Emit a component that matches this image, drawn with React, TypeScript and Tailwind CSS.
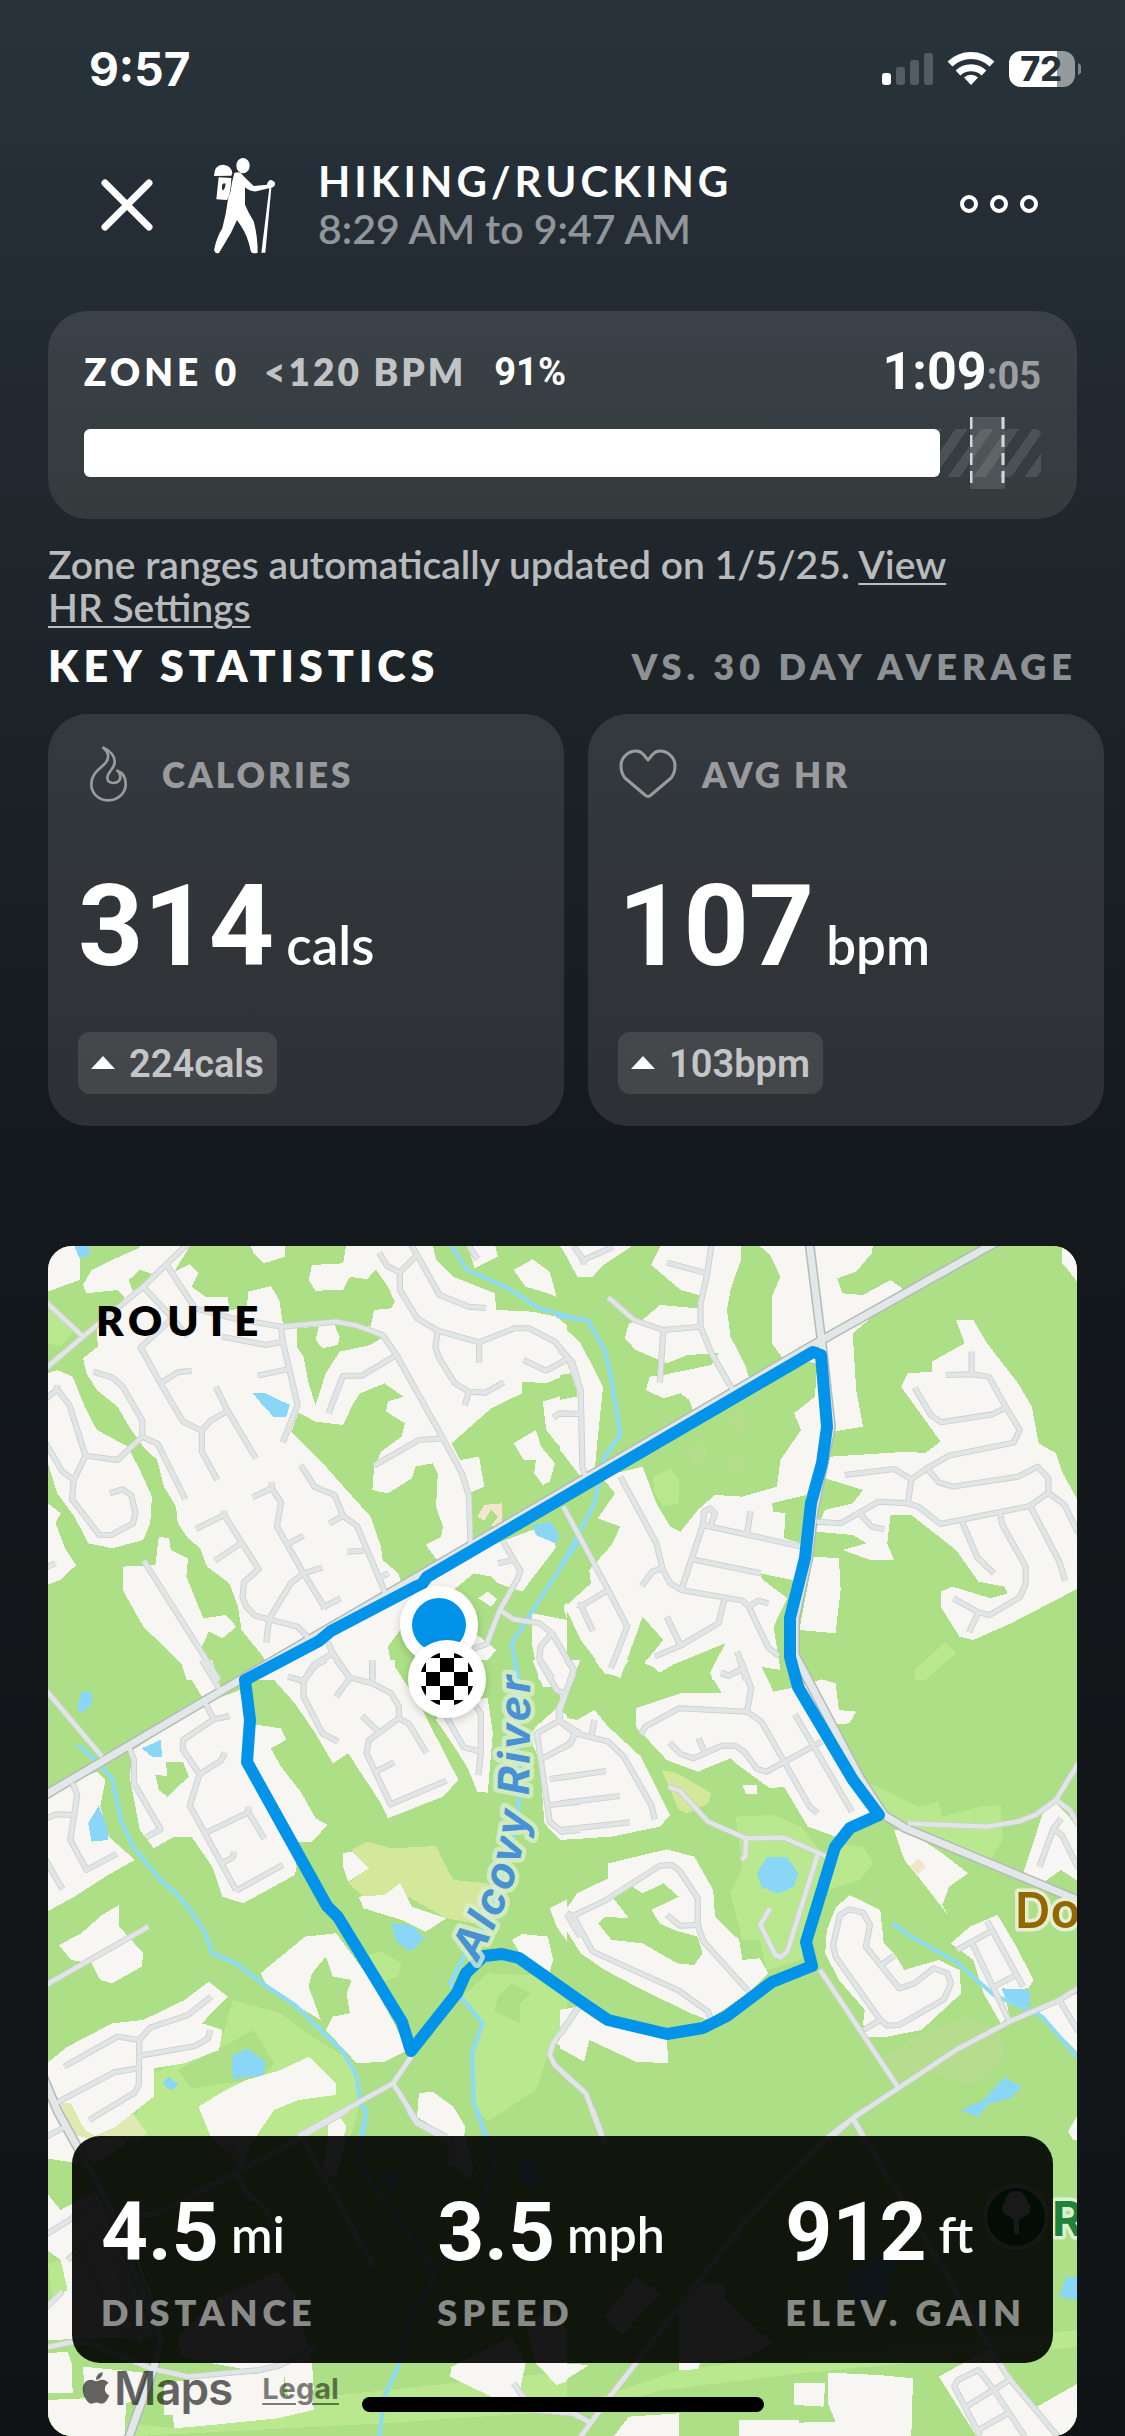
import React from "react";
import { FaApple } from "react-icons/fa";

const CREAM = "#f7f6f2";
const WOOD = "#addf86";
const MEADOW = "#b9e88f";
const GOLF = "#d3e89b";
const WATER = "#8ad6f6";

type Tile = {
  x: number;
  y: number;
  areas: [string, string][];
  ponds: string[];
  streams: string[];
  roads: string[];
};

/* The map is drawn from six tiles, each with its own local grid. */
const tiles: Tile[] = [
  {
    x: 40,
    y: 1230,
    areas: [
      [CREAM, "20,40 1568,40 1568,1350 20,1350"],
      [WOOD, "23,185 75,165 115,150 115,85 100,40 300,40 285,55 205,92 150,120 125,165 135,190 225,180 245,200 235,225 165,300 168,350 125,385 135,430 165,480 225,530 265,600 300,650 340,690 360,770 395,830 400,880 430,925 465,955 485,1010 550,1060 575,1130 585,1200 640,1270 660,1300 590,1360 20,1360 20,1065 60,1050 105,1005 75,960 45,880 60,850 23,820 23,700 50,790 100,860 140,940 210,955 300,930 320,880 325,800 290,720 255,650 165,600 130,530 95,440 50,420 23,430"],
      [CREAM, "240,1010 335,1005 345,920 375,925 380,960 430,985 425,1040 460,1130 475,1165 540,1155 570,1190 530,1225 490,1205 470,1250 520,1370 430,1360 410,1300 300,1190 240,1080"],
      [WOOD, "440,40 610,40 620,70 650,100 710,80 710,40 890,40 880,100 790,105 780,150 800,182 880,180 900,140 950,148 975,118 1010,170 1030,215 1020,235 970,240 960,290 930,285 860,270 750,290 705,280 695,210 670,168 605,185 600,235 550,240 545,200 480,200 440,170 460,130 435,103 390,125"],
      [WOOD, "258,150 290,120 322,130 310,175 268,182"],
      [WOOD, "745,295 810,290 800,330 820,355 865,345 870,320 855,285 930,290 990,325 960,345 870,365 830,430 800,525 780,460 765,380 745,350"],
      [WOOD, "750,548 800,575 880,585 910,520 930,490 1000,460 1055,500 1010,515 1005,545 1060,580 1050,620 990,665 970,715 965,780 1010,790 1080,745 1090,710 1140,700 1155,730 1150,830 1170,890 1165,920 1120,945 1160,1000 1100,1035 1050,1060 1040,1030 995,990 990,950 960,860 890,780 830,710 730,605"],
      [WOOD, "1195,640 1310,535 1400,490 1400,455 1470,460 1540,430 1568,430 1568,480 1460,515 1470,600 1500,640 1568,710 1568,900 1500,960 1490,920 1430,900 1250,970 1245,790 1290,770 1275,680 1220,690"],
      [CREAM, "1375,640 1440,600 1455,650 1495,700 1480,755 1460,765 1435,730 1440,690 1405,690"],
      [WOOD, "1140,40 1240,40 1262,115 1330,80 1320,40 1530,40 1568,90 1568,320 1500,260 1430,245 1325,240 1320,190 1200,140 1150,90"],
      [CREAM, "1375,120 1430,88 1480,125 1500,200 1460,185 1410,170"],
      [WOOD, "1310,1040 1330,1060 1400,1085 1500,950 1568,900 1568,1070 1520,1130 1530,1170 1430,1150 1430,1250 1450,1360 1030,1360 1010,1250 1060,1180 1200,1080 1260,1030"],
      [CREAM, "1240,1250 1270,1215 1325,1260 1300,1290 1260,1290"],
      [CREAM, "1272,1105 1300,1085 1328,1108 1310,1130"],
      ["#f3e6cf", "1270,860 1290,825 1342,820 1340,890 1310,888 1330,860 1310,838 1290,872"],
      [MEADOW, "23,225 100,300 60,350 23,340"],
    ],
    ponds: ["100,48 140,48 146,75 115,86", "617,488 650,488 725,525 715,562 680,562 650,530", "1430,885 1485,875 1508,920 1495,940 1440,915"],
    streams: ["1190,40 1240,120 1360,175 1450,235 1568,268", "1568,925 1530,985 1450,1110 1370,1240 1390,1350"],
    roads: [
      "0,430 125,320 300,170 430,40", "0,200 125,320", "300,170 385,265 430,320", "368,105 450,235 560,265 700,290 860,275 920,287 995,315 1035,375 1170,625 1225,730 1246,800 1250,950",
      "385,265 292,352 350,460 415,575 470,602 495,572 545,543", "350,460 400,427 440,423", "470,602 470,665 515,750", "510,470 545,543 627,685", "700,290 705,335 655,345 528,320", "705,335 748,525 705,637", "718,418 632,437",
      "155,425 210,442 240,470 297,572 297,620 342,642 422,808", "297,620 225,690 132,677 85,525 50,478 0,520", "50,465 50,478", "132,677 98,750 65,725 0,610", "98,750 93,808 172,915 208,915 270,880 277,850 265,795 238,778 203,790",
      "1035,375 935,437 880,437 838,550", "1170,625 1100,630 970,707", "985,68 1008,108 1045,127 1045,180 1095,265 1155,302 1275,337 1378,295 1420,295 1495,335 1535,385 1568,480", "1045,127 1095,75 1075,40", "1095,75 1160,195 1245,230 1295,234", "1275,337 1275,398", "1155,302 1148,350 1158,382 1203,458 1245,485 1293,488 1347,457", "1245,485 1233,527", "1535,385 1470,422 1403,390",
      "1490,562 1510,550 1568,552", "1245,48 1270,88", "757,705 797,770 855,795 880,858 920,887 1005,1095", "880,858 840,880", "940,962 892,965", "982,1045 1012,1030",
      "673,757 673,775 700,817 688,890 765,1030 825,1130 825,1140", "673,775 617,802", "715,945 765,917", "765,1030 820,1013", "825,1130 873,1105", "765,1030 728,1060 665,1168 657,1238", "535,842 535,855 635,1018 592,1057 588,1102 600,1132 625,1157 665,1168 748,1190 785,1230", "535,855 453,897", "587,938 508,992",
      "302,993 520,1350", "0,1020 45,1000", "1345,935 1395,1023 1385,1050 1335,1140 1297,1242 1255,1257", "1375,990 1330,1000", "1335,1140 1375,1168 1450,1180 1487,1210 1550,1320 1540,1350", "1487,1210 1453,1250 1450,1285 1487,1345", "835,1235 850,1270 897,1340", "850,1270 797,1302 770,1345", "965,1293 965,1350",
    ],
  },
  {
    x: 560,
    y: 1230,
    areas: [
      [WOOD, "20,40 1505,40 1505,1350 20,1350"],
      [CREAM, "0,48 0,40 220,40 120,110 95,140 50,140 20,80"],
      [CREAM, "0,280 60,340 125,470 110,620 100,730 60,740 0,660"],
      [WOOD, "0,435 30,430 48,480 48,500 0,510"],
      [CREAM, "295,40 525,40 525,90 495,180 485,240 495,320 540,410 550,450 500,490 390,550 375,510 350,490 300,505 250,480 260,440 300,435 440,405 460,370 370,375 310,400 220,360 188,325 200,280 240,270 290,225 400,235 420,200 350,180 265,105"],
      [CREAM, "580,48 600,40 910,40 905,70 860,125 805,145 820,190 880,195 960,150 1000,180 850,310 860,480 880,590 795,605 760,400 650,390 615,340 615,200 640,140 610,75"],
      [CREAM, "785,680 1010,665 1060,670 1105,635 1060,570 990,470 1010,430 1080,425 1080,395 1175,340 1150,270 1200,270 1240,340 1330,460 1370,530 1390,640 1440,670 1460,730 1500,805 1505,1075 1310,1180 1200,1230 1160,1220 1105,1130 1105,1085 1140,1070 1250,1105 1300,1090 1290,1070 1215,1055 1150,960 1020,855 960,855 950,940 970,990 900,990 820,960 890,940 850,915 740,905 770,840 850,820 880,780 770,745"],
      [CREAM, "735,980 810,985 815,1080 800,1210 695,1200"],
      [CREAM, "745,430 740,500 680,550 700,600 640,690 630,770 530,800 450,795 400,840 350,905 320,890 280,820 240,710 120,740 160,790 110,865 175,890 150,945 85,1020 90,1060 15,1130 60,1230 120,1310 175,1345 240,1160 300,1230 245,1300 290,1320 480,1240 440,1320 440,1360 610,1360 580,1310 640,1320 620,1190 660,1105 590,1050 580,1030 720,1060 770,700 780,450"],
      [WOOD, "615,820 715,795 700,940 650,925 655,850 620,845"],
      [WOOD, "740,910 850,915 890,940 820,960 800,980 735,980"],
      [CREAM, "1458,40 1505,40 1505,160 1475,120 1458,100"],
      [MEADOW, "270,740 320,715 345,750 345,820 300,830 275,790"],
      ["#b5dd8b", "360,660 420,645 435,690 385,705"],
      ["#b5dd8b", "480,560 530,550 545,590 515,610"],
      ["#b5dd8b", "480,690 510,675 540,700 505,728"],
      [MEADOW, "1030,1320 1120,1235 1150,1270 1060,1350 1030,1350"],
    ],
    ponds: [],
    streams: ["-10,258 80,270 130,360 150,450 175,615 130,680 100,820 40,940 0,1015"],
    roads: [
      "0,360 35,395 60,480 65,710 78,750", "0,552 65,552", "40,48 68,90 155,50", "68,90 68,105", "440,40 428,130 408,220 408,290 440,370 510,495", "428,130 310,98", "140,202 215,270 300,300 408,290", "300,300 290,458",
      "10,830 140,1080 195,1190 148,1315", "140,1080 62,1128 95,1203", "50,1125 62,1128", "175,740 280,940 297,1015 320,1060 352,1080 530,1112 548,1130 605,1253 635,1278", "297,1015 268,1025 237,1068", "548,1130 575,1112 605,1120", "352,1080 415,885 700,950", "415,885 418,845 435,835 450,850 438,885", "553,843 543,915", "380,987 582,1030", "478,1105 460,1180 350,1247 275,1280", "310,1160 350,1247", "515,1265 540,1350", "467,1330 490,1337 528,1317",
      "745,875 815,880 925,815 1010,820 1040,830 1105,882 1365,828 1418,788 1418,745 1387,710 1330,740 1140,770 1100,757 1065,715", "1010,820 1020,748 1065,715 1130,677 1317,638 1335,600 1295,532 1245,440 1195,433 1120,435", "1195,433 1195,365", "1295,532 1255,553 1107,577 1078,557 1030,473", "1020,748 970,717 827,735", "870,850 905,890 942,898", "1418,788 1465,825 1505,910", "1365,828 1450,995 1467,1053", "1277,850 1285,885 1352,1010 1352,1062 1335,1102 1248,1155 1215,1147 1142,1105", "1215,1147 1188,1207", "1168,877 1212,983 1260,1030",
    ],
  },
  {
    x: 40,
    y: 1660,
    areas: [
      [WOOD, "20,60 1568,60 1568,1440 20,1440"],
      [MEADOW, "1225,1010 1300,940 1500,950 1568,1040 1480,1170 1440,1290 1300,1385 1260,1340 1250,1180 1285,1100"],
      [MEADOW, "250,1440 330,1240 420,1200 530,1130 560,1020 700,1060 760,1110 900,1200 930,1330 900,1440"],
      [WOOD, "400,1230 530,1160 620,1110 680,1210 640,1260 540,1270 440,1285"],
      [MEADOW, "930,890 990,875 1050,910 1040,950 980,970"],
      ["#dfe9b2", "60,1330 90,1320 150,1400 200,1400 270,1360 310,1420 290,1440 90,1440"],
      [CREAM, "415,0 500,0 525,80 470,110 430,40"],
      [CREAM, "270,270 480,130 580,90 600,190 700,205 715,240 670,265 700,320 760,400 800,475 835,495 790,545 740,545 745,620 740,645 590,730 530,710 500,620 440,530 390,530 330,565 290,510 260,350"],
      [WOOD, "335,345 370,348 365,305 415,305 432,350 370,410 345,390"],
      [CREAM, "20,420 100,360 165,335 190,360 175,440 200,530 275,600 190,650 100,710 20,755"],
      [CREAM, "680,40 760,0 1030,0 1030,20 1100,130 1180,290 1215,360 1170,410 1010,475 990,430 920,320 895,280 850,310 800,220 740,130 680,60"],
      [CREAM, "1160,150 1180,120 1300,115 1315,220 1300,398 1270,395 1240,320 1190,240 1150,180"],
      [CREAM, "1430,0 1568,0 1530,85 1460,80"],
      [CREAM, "1440,200 1500,145 1568,190 1568,540 1510,540 1465,490 1450,300 1420,230"],
      [GOLF, "905,570 950,545 1020,565 1150,558 1200,660 1300,670 1260,790 1180,775 1070,710 1000,705 940,710 895,670 950,625"],
      [CREAM, "880,580 905,575 955,625 895,665 880,620"],
      [CREAM, "925,710 1000,705 1045,670 1080,740 1180,775 1120,815 1050,780 940,745"],
      [CREAM, "55,855 120,820 180,765 230,735 230,800 300,880 295,920 210,970 175,960 150,910 90,900"],
      [CREAM, "640,940 770,830 860,820 960,960 1070,1170 1000,1205 920,1210 830,1110 850,1070 900,1060 890,1000 905,960 850,950 830,890 790,940 780,980 815,1080 750,1040 660,980"],
      [CREAM, "20,1210 80,1160 210,1090 300,1080 420,1020 490,965 545,1010 470,1090 530,1110 520,1170 420,1210 330,1225 330,1310 220,1400 160,1428 130,1410 90,1330 60,1330 95,1440 20,1440"],
      [CREAM, "460,1340 540,1290 600,1260 700,1230 780,1190 860,1270 860,1305 750,1320 680,1350 620,1440 500,1440"],
      [CREAM, "1100,1300 1140,1295 1200,1340 1235,1400 1230,1440 1180,1428 1095,1370"],
      [CREAM, "835,1390 870,1370 890,1400 880,1440 835,1440"],
      [CREAM, "1370,840 1400,822 1475,830 1490,900 1480,935 1400,890"],
      [CREAM, "1480,745 1568,700 1568,900 1500,800"],
      [CREAM, "1500,1150 1568,1060 1568,1200"],
      [WOOD, "1330,1010 1370,970 1425,1000 1395,1030 1395,1090 1320,1055"],
    ],
    ponds: ["118,97 152,95 152,130 120,160 108,145", "295,265 350,240 355,290 325,290", "140,490 170,438 195,500 198,540 150,545", "1020,790 1080,795 1117,835 1075,875 1035,845", "556,1190 600,1165 655,1205 650,1245 560,1258", "355,1270 375,1250 402,1275 380,1292"],
    streams: ["110,255 160,300 210,355 235,480 270,560 350,660 400,705 440,755 480,820 500,880 560,905 660,980 740,1035 880,1175 920,1250 930,1330 948,1355 930,1440", "1378,0 1385,60 1390,440 1360,600 1290,800 1230,890 1190,970 1285,1090 1255,1180 1260,1330 1300,1440"],
    roads: [
      "0,70 180,290", "260,265 273,300 273,370 350,508 308,532", "480,130 505,178 550,168", "505,178 415,240 415,268 463,343 435,437 570,692", "463,343 525,302 537,278", "483,518 605,457 652,537", "605,440 605,457", "527,610 560,592 563,575", "570,692 705,615",
      "95,370 108,405 88,540 135,630 223,582", "100,465 48,463 0,482", "0,570 65,688", "0,985 315,800", "470,0 520,85", "720,50 765,63 800,15 830,0", "765,63 765,110 820,220 865,245", "860,0 900,53 965,70 965,0", "900,53 860,110", "965,70 1020,100 1042,140 1042,175 955,240 948,280 1018,433 1180,362", "1042,175 1070,190 1122,278", "935,168 980,212", "975,335 1028,307",
      "1180,170 1230,262 1280,275", "1260,130 1280,160 1280,275 1273,345", "1450,0 1500,90 1520,100", "1550,40 1505,150 1508,182 1568,220", "1508,182 1443,220 1480,485 1515,515 1568,510", "1460,295 1540,250 1555,220", "1480,357 1568,345", "1480,435 1568,425",
      "70,1220 225,1130 288,1140 320,1103 430,1065 497,1010", "288,1140 287,1275 275,1298 143,1380", "287,1188 450,1158 487,1137 495,1110", "45,1330 215,1237 287,1225", "0,1440 75,1400", "1078,1190 1025,1270 750,1428", "1025,1270 1095,1385 1180,1430", "1568,1035 1490,1150 1480,1185 1495,1215 1568,1285", "1530,762 1568,830",
    ],
  },
  {
    x: 560,
    y: 1660,
    areas: [
      [WOOD, "20,60 1505,60 1505,1440 20,1440"],
      [MEADOW, "510,470 620,465 700,500 770,590 720,800 700,900 600,930 580,840 530,840 495,700 530,620"],
      [MEADOW, "800,550 880,560 910,610 870,660 780,690"],
      [MEADOW, "900,370 1040,440 1100,425 1110,470 1220,440 1280,435 1285,540 1250,600 960,480"],
      ["#b6dd8d", "930,1200 1030,1130 1180,1070 1280,1120 1290,1200 1190,1275 1060,1230 980,1265"],
      [CREAM, "0,0 60,0 10,110 0,130"],
      [CREAM, "100,0 200,0 170,50 130,40"],
      [CREAM, "245,0 350,0 290,38"],
      [CREAM, "220,145 350,100 470,100 435,40 455,0 580,10 620,95 690,80 760,58 800,70 810,150 860,155 840,190 790,195 870,350 930,460 850,520 800,530 720,500 650,380 610,385 510,310 495,295 400,335 310,300 220,200"],
      [CREAM, "0,170 50,180 100,150 140,200 235,290 320,465 290,500 150,530 0,540"],
      [CREAM, "10,760 50,700 140,655 140,610 310,568 390,590 445,690 450,770 520,840 530,900 580,895 605,940 545,1000 430,1080 380,1060 240,990 130,930 60,880 0,780"],
      [WOOD, "155,715 210,680 240,700 300,670 345,710 265,750 290,790 330,810 400,830 414,880 390,915 340,910 240,850 150,840 110,790 130,770 200,775"],
      [CREAM, "0,1050 50,1040 120,1090 310,1140 315,1210 220,1205 85,1140 70,1205 0,1165"],
      [CREAM, "840,705 930,750 940,850 970,880 1000,930 1100,900 1160,930 1165,1000 1050,1110 950,1130 890,1130 880,1090 885,1050 810,960 770,880 775,810 800,745"],
      [CREAM, "970,510 1010,510 1110,580 1185,640 1130,680 1110,735 1130,770 1040,650 1000,600"],
      [CREAM, "1135,850 1190,800 1270,765 1320,850 1375,960 1360,985 1290,990 1305,1070 1280,1090 1230,1000 1200,900"],
      [CREAM, "1405,450 1440,430 1505,500 1505,665 1455,630 1400,670 1345,640"],
      [CREAM, "1390,1060 1450,1020 1505,1000 1505,1180"],
      [CREAM, "1475,1415 1500,1370 1505,1440 1490,1440"],
      [CREAM, "530,375 572,375 572,403 540,403"],
      ["#f1e6c9", "1015,620 1040,597 1062,620 1040,645"],
      [GOLF, "295,330 340,340 440,400 430,430 370,460 345,450 320,390"],
    ],
    ponds: ["600,592 660,592 692,640 680,680 633,702 585,680 572,640", "1165,1350 1230,1320 1290,1252 1340,1280 1310,1315 1250,1330 1210,1370", "1282,985 1365,990 1365,1040 1300,1030"],
    streams: ["965,790 1020,830 1150,905 1260,1005 1400,1070 1505,1195"],
    roads: [
      "20,0 40,30 0,150 0,185 45,220 140,245 185,290 265,435 275,478", "45,220 25,255 0,268", "100,180 92,225", "0,353 133,333", "0,430 173,408", "0,510 203,487", "525,0 555,85 543,155 345,145 248,200 235,223", "467,38 490,47 525,30", "543,155 585,185 725,440 748,460", "318,248 350,282 388,295 470,257 508,257 535,275 572,327 600,335 760,245", "402,235 420,275", "682,163 848,455",
      "315,380 347,392 430,485 540,535 650,533 775,590", "540,535 538,590 527,600", "748,585 660,875 640,892 625,885 582,795 610,745", "20,760 38,768 130,722 290,617 325,615 347,632 400,715 400,795 417,845 548,995", "38,768 95,875 345,992 430,1055 437,1075", "400,795 348,797 310,765", "55,1040 0,1125", "0,1230 75,1300 125,1440",
      "755,930 980,1280", "882,1110 930,1080 800,890 793,855 813,765 840,748 880,758 900,795 888,860 985,985 1030,970 1085,925 1125,940 1135,970 1115,1018 985,1095 950,1097 930,1080", "930,917 970,887", "1010,490 1120,495 1240,500 1330,485 1380,465 1440,420 1505,310", "1440,420 1480,450 1505,495", "1455,475 1432,508 1392,620", "1432,508 1457,525 1505,625",
      "1153,870 1255,812", "1240,783 1345,980", "1197,850 1305,1085", "1260,980 1325,945", "780,1440 850,1375 1150,1170 1305,1085 1450,1020 1505,985", "850,1375 885,1440", "1450,1020 1505,1115",
    ],
  },
  {
    x: 40,
    y: 2110,
    areas: [
      [WOOD, "20,90 1568,90 1568,980 20,980"],
      [MEADOW, "820,860 1568,780 1568,900 1000,940 250,980 250,940 400,955"],
      [MEADOW, "23,460 60,450 90,560 40,600"],
      [CREAM, "20,60 100,75 160,90 260,80 240,110 160,160 110,160 20,145"],
      [CREAM, "20,250 60,300 160,245 240,320 340,600 350,680 20,690 20,580 80,540 60,450 20,420"],
      [CREAM, "500,80 620,80 590,170 530,110"],
      [CREAM, "835,80 890,80 860,200 820,190"],
      [CREAM, "1200,80 1235,80 1260,180 1240,210 1200,160"],
      [CREAM, "20,730 80,725 92,760 95,850 20,850"],
      [CREAM, "125,770 320,790 315,860 250,880 245,980 20,980 20,870 130,865"],
      [CREAM, "360,820 500,800 710,785 705,860 790,840 795,900 690,925 500,945 390,955 385,915 360,915"],
      [CREAM, "400,680 520,560 690,485 740,550 790,760 795,840 720,860 710,800 500,760 410,740"],
      [CREAM, "1195,770 1370,680 1410,760 1390,860 1310,860 1190,800"],
      [CREAM, "1410,640 1480,600 1568,700 1568,800 1500,825 1440,760"],
    ],
    ponds: ["980,175 1040,200 1035,245 1000,220", "1395,150 1430,140 1460,210 1430,230 1400,215"],
    streams: ["948,0 925,160 1150,490 1090,600 1040,770 1000,860 985,980", "1270,0 1320,170 1270,300 1150,490"],
    roads: ["-20,720 100,695 160,705 320,775 430,800 640,780 700,765 800,710", "270,320 340,310 570,190 760,80 895,0", "760,80 970,470", "570,190 600,250 650,290 690,370", "555,105 585,180", "0,385 170,275", "80,450 200,340", "0,610 65,545", "1070,0 1095,40 1190,95 1190,170", "1375,820 1410,870 1430,900 1550,910 1568,925", "130,430 210,650 290,690 220,430"],
  },
  {
    x: 560,
    y: 2110,
    areas: [
      [WOOD, "20,90 1505,90 1505,980 20,980"],
      [MEADOW, "0,900 350,780 800,720 1505,660 1505,710 700,790 300,840 0,920"],
      [CREAM, "130,620 220,500 290,550 180,675"],
      [CREAM, "345,600 410,520 480,520 480,570 615,700 540,745 408,760 400,778 345,780"],
      [CREAM, "680,820 770,820 765,890 680,885"],
      [CREAM, "778,788 925,795 1025,805 1020,980 520,980 520,930 695,930 695,938 800,935 778,880"],
      [CREAM, "155,980 200,920 345,910 345,980"],
      [CREAM, "1100,800 1240,720 1290,770 1440,980 1210,980"],
      [CREAM, "1385,890 1505,820 1505,980 1440,980"],
      [CREAM, "0,760 85,765 0,820"],
    ],
    ponds: ["840,500 930,430 980,450 940,560 870,590 830,560", "1470,502 1505,502 1505,572 1450,560"],
    streams: [],
    roads: ["60,980 145,860 220,760 540,330 780,80 850,25 885,0", "95,0 130,100", "850,25 1300,800 1450,985", "1220,978 1145,830 1155,810 1215,780 1260,840 1350,980", "1180,890 1305,810", "1215,960 1300,910", "0,905 45,912 90,940"],
  },
];

const mainRoads = [
  "M30,1804 L245,1677 L427,1571 L813,1345 L1000,1240",
  "M809,1240 L822,1345 L831,1427 L814,1510 L808,1560 L795,1618 L795,1655 L860,1778 L884,1815 L905,1828 L1080,1901",
  "M36,2060 L58,2112 L105,2197 L161,2340 L154,2367 L128,2440",
];

const routePath =
  "M245,1680 L319,1641 L331,1631 L415,1587 L422,1584 L427,1577 L813,1352 L821,1355 L827,1427 L822,1463 L811,1503 L805,1558 L790,1618 L790,1657 L798,1687 L853,1780 L879,1815 L850,1828 L835,1847 L806,1942 L812,1966 L772,1982 L727,2016 L703,2028 L667,2034 L608,2020 L580,2001 L519,1958 L502,1954 L484,1956 L466,1973 L457,1993 L411,2051 L402,2022 L338,1917 L327,1906 L247,1762 L250,1720 Z";

const tileTransform = (t: Tile) => `translate(${t.x} ${t.y}) scale(0.3444 0.3333)`;

function RouteMap() {
  return (
    <svg
      className="absolute inset-0 h-full w-full"
      viewBox="48 1246 1029 1190"
      preserveAspectRatio="xMidYMin slice"
      role="img"
      aria-label="Map of the hiking route beside the Alcovy River"
    >
      <defs>
        <path id="river-label" d="M477,1963 C500,1917 520,1880 527,1820 C530,1790 530,1740 530,1620" />
        <clipPath id="flag-clip">
          <circle cx="447" cy="1679" r="27" />
        </clipPath>
        <filter id="pin-shadow" x="-30%" y="-30%" width="160%" height="160%">
          <feDropShadow dx="0" dy="3" stdDeviation="4" floodOpacity="0.2" />
        </filter>
      </defs>
      <rect x="48" y="1246" width="1029" height="1190" fill={WOOD} />
      {tiles.map((t, i) => (
        <g key={i} transform={tileTransform(t)} shapeRendering="crispEdges">
          {t.areas.map(([fill, points], j) => (
            <polygon key={j} points={points} fill={fill} />
          ))}
          {t.ponds.map((points, j) => (
            <polygon key={j} points={points} fill={WATER} />
          ))}
        </g>
      ))}
      {tiles.map((t, i) => (
        <g key={i} transform={tileTransform(t)} fill="none" stroke="#8cdcf8" strokeWidth="12" strokeLinejoin="round">
          {t.streams.map((points, j) => (
            <polyline key={j} points={points} />
          ))}
        </g>
      ))}
      {tiles.map((t, i) => (
        <g key={i} transform={tileTransform(t)} fill="none" stroke="#cbd0d0" strokeWidth="18" strokeLinejoin="round">
          {t.roads.map((points, j) => (
            <polyline key={j} points={points} />
          ))}
        </g>
      ))}
      <g fill="none" stroke="#b4b9b9" strokeWidth="10">
        {mainRoads.map((d) => (
          <path key={d} d={d} />
        ))}
      </g>
      {tiles.map((t, i) => (
        <g key={i} transform={tileTransform(t)} fill="none" stroke="#e1e5e6" strokeWidth="13" strokeLinejoin="round">
          {t.roads.map((points, j) => (
            <polyline key={j} points={points} />
          ))}
        </g>
      ))}
      <g fill="none" stroke="#e2e7e8" strokeWidth="7">
        {mainRoads.map((d) => (
          <path key={d} d={d} />
        ))}
      </g>
      <path d={routePath} fill="none" stroke="#0393e9" strokeWidth="12" strokeLinejoin="round" />

      <g fontFamily="Inter, sans-serif" strokeLinejoin="round" paintOrder="stroke">
        <text fontSize="43" fontWeight="700" fontStyle="italic" letterSpacing="3" fill="#4791d4" stroke="#dcefcf" strokeOpacity="0.8" strokeWidth="9">
          <textPath href="#river-label">Alcovy River</textPath>
        </text>
        <text x="1015" y="1928" fontSize="49" fontWeight="600" fill="#946800" stroke="#e4efd3" strokeWidth="7">
          Do
        </text>
        <text x="1052" y="2236" fontSize="48" fontWeight="700" fill="#1e843c" stroke="#dff0d0" strokeWidth="7">
          R
        </text>
      </g>
      <circle cx="1016" cy="2217" r="33" fill="#e8f2e0" />
      <circle cx="1016" cy="2217" r="29" fill="#1e843c" />
      <path d="M1014 2234v-14l-5-4a8 8 0 0 1-4-14 11 11 0 0 1 22 0 8 8 0 0 1-2 14l-6 4v14z" fill="#fff" />

      <g filter="url(#pin-shadow)">
        <circle cx="439" cy="1625" r="39" fill="#fff" />
        <circle cx="439" cy="1625" r="27" fill="#0393e9" />
      </g>
      <g filter="url(#pin-shadow)">
        <circle cx="447" cy="1679" r="39" fill="#fff" />
      </g>
      <g clipPath="url(#flag-clip)" fill="#000">
        {[-2, -1, 0, 1, 2].map((r) =>
          [-2, -1, 0, 1, 2].map((c) =>
            (r + c) % 2 !== 0 ? <rect key={`${r}${c}`} x={440 + c * 14} y={1672 + r * 14} width="14" height="14" /> : null,
          ),
        )}
      </g>
    </svg>
  );
}

function StatusBar() {
  return (
    <div className="flex h-[138px] items-center justify-between pl-[89px] pr-[44px]">
      <time className="font-['Inter'] text-[46px] font-bold leading-none">9:57</time>
      <svg className="h-10 w-[200px]" viewBox="881 49 200 40" aria-label="Weak signal, Wi-Fi, battery 72 percent" role="img">
        <rect x="882" y="73" width="9" height="12" rx="3" fill="#fff" />
        <g fill="#535c63">
          <rect x="896" y="67" width="9" height="18" rx="3" />
          <rect x="910" y="60" width="9" height="25" rx="3" />
          <rect x="924" y="53" width="9" height="32" rx="3" />
        </g>
        <g fill="none" stroke="#fff" strokeWidth="7">
          <path d="M950 64a30 30 0 0 1 42 0" />
          <path d="M958 73a19 19 0 0 1 26 0" />
        </g>
        <path d="M971 85l-7-7.500a10 10 0 0 1 14 0z" fill="#fff" />
        <path d="M1056 51h7a12 12 0 0 1 12 12v12a12 12 0 0 1-12 12h-7z" fill="#959a9d" />
        <path d="M1021 51h36v36h-36a12 12 0 0 1-12-12v-12a12 12 0 0 1 12-12z" fill="#fff" />
        <path d="M1078 63q4 2 4 6t-4 6z" fill="#7d8387" />
        <text x="1041" y="81" textAnchor="middle" fontFamily="Inter" fontSize="34" fontWeight="800" fill="#273238">
          72
        </text>
      </svg>
    </div>
  );
}

function Hiker() {
  return (
    <svg className="h-[120px] w-[120px] shrink-0" viewBox="0 0 360 360" fill="#fff" aria-hidden="true">
      <ellipse cx="192" cy="74" rx="20" ry="23" />
      <path d="M105 105q1-34 27-34 24 1 28 25l-3 8z" />
      <path d="M119 109l38 2q-1 32-7 54l-6 12-32-2zM135 127q-10 2-4 22 7-5 9-21z" fillRule="evenodd" />
      <path d="M166 96q18-8 27 9l31 30 40-4q3-15 13-14 15 7 10 16-4 8-15 8l-40 10q-18 2-34-12v52q10 24 26 50 12 44 12 94-14 4-20-2-10-50-30-78l-12-18-18 38-36 61q-10 4-15-8 8-40 25-66l10-44 4-24 3-20q10-22 12-50z" />
      <path d="M271 140h6l-18 195h-12z" />
    </svg>
  );
}

function Header() {
  return (
    <header className="flex h-[120px] items-center pl-[97px] pr-[84px]">
      <button type="button" aria-label="Close" className="h-[60px] w-[60px] shrink-0">
        <svg viewBox="0 0 60 60" className="h-full w-full" stroke="#fff" strokeWidth="7" strokeLinecap="round">
          <path d="M8 8L52 52M52 8L8 52" />
        </svg>
      </button>
      <div className="mb-2 ml-[22px]">
        <Hiker />
      </div>
      <div className="ml-[19px] grow">
        <h1 className="text-[42px] font-bold leading-[48px] tracking-[4px]">HIKING/RUCKING</h1>
        <p className="text-[41px] font-semibold leading-[48px] text-white/50">8:29 AM to 9:47 AM</p>
      </div>
      <button type="button" aria-label="More options" className="h-10 w-[84px]">
        <svg viewBox="0 0 84 40" className="h-full w-full" fill="none" stroke="#fff" strokeWidth="4">
          <circle cx="12" cy="19" r="7" />
          <circle cx="42" cy="19" r="7" />
          <circle cx="72" cy="19" r="7" />
        </svg>
      </button>
    </header>
  );
}

function ZoneCard() {
  return (
    <section className="h-[208px] rounded-[40px] bg-linear-to-b from-[#3a4148] to-[#343b3d] px-9 pt-7">
      <div className="flex h-[66px] items-center">
        <span className="text-[37px] font-extrabold tracking-[4px]">ZONE 0</span>
        <span className="ml-6 text-[37px] font-extrabold tracking-[3px] text-white/70">&lt;120 BPM</span>
        <span className="ml-7 font-['Roboto'] text-[38px] font-bold">91%</span>
        <span className="ml-auto flex items-baseline font-['Roboto'] font-bold">
          <span className="text-[52px]">1:09</span>
          <span className="text-[38px] text-white/50">:05</span>
        </span>
      </div>
      <div className="relative mt-6 h-12 rounded-[6px] bg-[repeating-linear-gradient(125deg,#4b5154_0px,#4b5154_10px,transparent_10px,transparent_21px)]">
        <div className="h-full w-[89.4%] rounded-[6px] bg-white" />
        <div className="absolute -bottom-3 -top-3 right-[36px] w-[35px] bg-white/12">
          <svg className="h-full w-full" stroke="#d5d8da" strokeWidth="3" strokeDasharray="12 6" aria-hidden="true">
            <path d="M1 0V66M33 0V66" />
          </svg>
        </div>
      </div>
    </section>
  );
}

function FlameIcon() {
  return (
    <svg className="h-[60px] w-[60px]" viewBox="54 48 180 180" fill="none" stroke="#989c9e" strokeWidth="8" strokeLinecap="round" strokeLinejoin="round" aria-hidden="true">
      <path d="M130 59C153 68 166 88 164 104C162 124 142 132 142 150C143 162 152 165 161 165C173 165 181 157 181 148C182 139 178 134 172 128C189 134 197 150 197 168C197 197 173 217 144 217C115 217 94 196 94 168C94 135 120 124 138 103C150 86 146 73 130 59Z" />
    </svg>
  );
}

function HeartIcon() {
  return (
    <svg className="h-[60px] w-[60px]" viewBox="618 746 60 60" fill="none" stroke="#989c9e" strokeWidth="3" strokeLinejoin="round" aria-hidden="true">
      <path d="M648 762l-5-6q-3-3-7-3-6 0-10 4-5 4-5 11t4 12l20 17q3 3 6 0l20-17q4-5 4-12t-5-11q-4-4-10-4-4 0-7 3z" />
    </svg>
  );
}

type Stat = { label: string; value: string; unit: string; delta: string; icon: React.ReactNode };

const stats: Stat[] = [
  { label: "CALORIES", value: "314", unit: "cals", delta: "224cals", icon: <FlameIcon /> },
  { label: "AVG HR", value: "107", unit: "bpm", delta: "103bpm", icon: <HeartIcon /> },
];

function StatCard({ label, value, unit, delta, icon }: Stat) {
  return (
    <article className="h-[412px] w-[516px] shrink-0 rounded-[40px] bg-linear-to-b from-[#34393d] to-[#2d3135] px-[30px] pt-[30px]">
      <div className="flex h-[60px] items-center gap-6">
        {icon}
        <h3 className="text-[35px] font-extrabold tracking-[3px] text-white/50">{label}</h3>
      </div>
      <p className="mt-[62px] flex h-[120px] items-baseline gap-3 leading-[120px]">
        <span className="font-['Roboto'] text-[114px] font-bold">{value}</span>
        <span className="text-[53px] font-semibold">{unit}</span>
      </p>
      <p className="mt-[46px] inline-flex h-[62px] items-center gap-[14px] rounded-[12px] bg-white/10 px-[13px] pt-[3px] font-['Roboto'] text-[38px] font-semibold text-white/70">
        <svg className="mb-1 h-[13px] w-6" viewBox="0 0 24 13" fill="#fff" aria-hidden="true">
          <path d="M12 0L24 13H0z" />
        </svg>
        {delta}
      </p>
    </article>
  );
}

const totals = [
  { value: "4.5", unit: "mi", label: "DISTANCE" },
  { value: "3.5", unit: "mph", label: "SPEED" },
  { value: "912", unit: "ft", label: "ELEV. GAIN" },
];

export default function App() {
  return (
    <div className="relative flex min-h-screen flex-col overflow-hidden bg-[linear-gradient(#28333a_0px,#232b33_300px,#1c2327_720px,#14191d_1150px,#101316_2436px)] font-['Lato',sans-serif] text-white">
      <StatusBar />
      <div className="mt-[7px]">
        <Header />
      </div>
      <main className="mt-[46px] flex grow flex-col px-12">
        <ZoneCard />
        <p className="mt-6 max-w-[940px] text-[39px] font-semibold leading-[43px] text-white/70">
          Zone ranges automatically updated on 1/5/25.{" "}
          <a href="#hr-settings" className="underline decoration-2 underline-offset-4">
            View HR Settings
          </a>
        </p>
        <div className="flex h-[70px] items-center justify-between pt-1">
          <h2 className="text-[43px] font-extrabold tracking-[5px]">KEY STATISTICS</h2>
          <span className="text-[36px] font-extrabold tracking-[5px] text-white/50">VS. 30 DAY AVERAGE</span>
        </div>
        <div className="mt-[15px] flex gap-6">
          {stats.map((s) => (
            <StatCard key={s.label} {...s} />
          ))}
        </div>
        <section className="relative mt-[120px] flex min-h-[1190px] grow flex-col overflow-hidden rounded-[24px]">
          <RouteMap />
          <h2 className="relative ml-12 mt-[47px] text-[42px] font-extrabold leading-[54px] tracking-[5px] text-black">ROUTE</h2>
          <dl className="relative mx-6 mt-auto flex h-[227px] justify-between rounded-[28px] bg-black/90 pl-[29px] pr-[27px] pt-[46px]">
            {totals.map((t) => (
              <div key={t.label} className="flex flex-col-reverse justify-end">
                <dt className="mt-2 text-[36px] font-extrabold leading-[44px] tracking-[5px] text-white/50">{t.label}</dt>
                <dd className="flex items-center gap-3 leading-[96px]">
                  <span className="font-['Roboto'] text-[82px] font-bold">{t.value}</span>
                  <span className="pt-1 text-[50px] font-semibold">{t.unit}</span>
                </dd>
              </div>
            ))}
          </dl>
          <div className="relative ml-[30px] flex h-[73px] items-start gap-[30px] text-black/60">
            <span className="flex items-center font-['Inter'] text-[46px] font-semibold leading-[50px] tracking-tight">
              <FaApple className="h-9 w-9" aria-hidden="true" />
              Maps
            </span>
            <a href="#legal" className="mt-1 font-['Inter'] text-[29px] font-bold leading-[44px] text-black/50 underline decoration-2 underline-offset-4">
              Legal
            </a>
          </div>
        </section>
      </main>
      <div className="absolute bottom-6 left-1/2 h-[15px] w-[402px] -translate-x-1/2 rounded-full bg-black" />
    </div>
  );
}
